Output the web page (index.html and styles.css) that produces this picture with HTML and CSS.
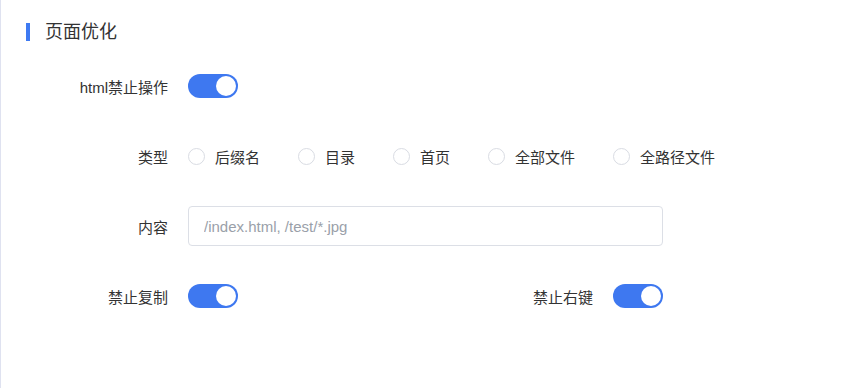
FILE: index.html
```html
<!DOCTYPE html>
<html lang="zh-CN">
<head>
<meta charset="utf-8">
<title>页面优化</title>
<link rel="stylesheet" href="styles.css">
</head>
<body>
<div class="panel">
  <div class="title">
    <span class="title-bar"></span>
    <span class="title-text">页面优化</span>
  </div>
  <div class="form">
    <div class="item">
      <label class="label">html禁止操作</label>
      <span class="switch on"><span class="knob"></span></span>
    </div>
    <div class="item">
      <label class="label">类型</label>
      <div class="radios">
        <span class="radio"><span class="circle"></span><span class="radio-text">后缀名</span></span>
        <span class="radio"><span class="circle"></span><span class="radio-text">目录</span></span>
        <span class="radio"><span class="circle"></span><span class="radio-text">首页</span></span>
        <span class="radio"><span class="circle"></span><span class="radio-text">全部文件</span></span>
        <span class="radio"><span class="circle"></span><span class="radio-text">全路径文件</span></span>
      </div>
    </div>
    <div class="item">
      <label class="label">内容</label>
      <input class="input" type="text" placeholder="/index.html, /test/*.jpg">
    </div>
    <div class="item-row">
      <div class="item col">
        <label class="label">禁止复制</label>
        <span class="switch on"><span class="knob"></span></span>
      </div>
      <div class="item col">
        <label class="label">禁止右键</label>
        <span class="switch on"><span class="knob"></span></span>
      </div>
    </div>
  </div>
</div>
</body>
</html>
```
FILE: styles.css
```css
* { box-sizing: border-box; }
html, body {
  margin: 0;
  padding: 0;
  background: #fff;
}
body {
  font-family: "Liberation Sans", "Noto Sans CJK SC", sans-serif;
  color: #333;
  width: 867px;
  height: 388px;
  overflow: hidden;
}
.panel {
  height: 388px;
  border-left: 1px solid #dfe2f0;
  padding-top: 20px;
}
.title {
  display: flex;
  align-items: center;
  height: 24px;
  padding-left: 25px;
}
.title-bar {
  width: 4px;
  height: 18px;
  background: #3e7af2;
  margin-right: 15px;
}
.title-text {
  font-size: 18px;
  color: #333;
  line-height: 24px;
}
.form {
  margin-top: 22px;
}
.item {
  display: flex;
  align-items: center;
  height: 40px;
  margin-bottom: 30px;
}
.label {
  width: 167px;
  text-align: right;
  font-size: 15px;
  margin-right: 20px;
  color: #333;
}
.switch {
  position: relative;
  display: inline-block;
  width: 50px;
  height: 24px;
  border-radius: 12px;
  background: #dcdfe6;
}
.switch.on {
  background: #3e78f0;
}
.knob {
  position: absolute;
  top: 2px;
  left: 2px;
  width: 20px;
  height: 20px;
  border-radius: 50%;
  background: #fff;
}
.switch.on .knob {
  left: 28px;
}
.radios {
  display: flex;
  align-items: center;
}
.radio {
  display: flex;
  align-items: center;
  margin-right: 38px;
  font-size: 15px;
}
.circle {
  width: 17px;
  height: 17px;
  border: 1px solid #d9dce3;
  border-radius: 50%;
  background: #fff;
  margin-right: 10px;
}
.input {
  width: 475px;
  height: 40px;
  border: 1px solid #dcdfe6;
  border-radius: 4px;
  padding: 0 15px;
  font-family: "Liberation Sans", "Noto Sans CJK SC", sans-serif;
  font-size: 15px;
  color: #333;
  outline: none;
}
.input::placeholder {
  color: #9a9fa9;
}
.item-row {
  display: grid;
  grid-template-columns: 425px 425px;
}
.item-row .item {
  margin-bottom: 0;
}
```
